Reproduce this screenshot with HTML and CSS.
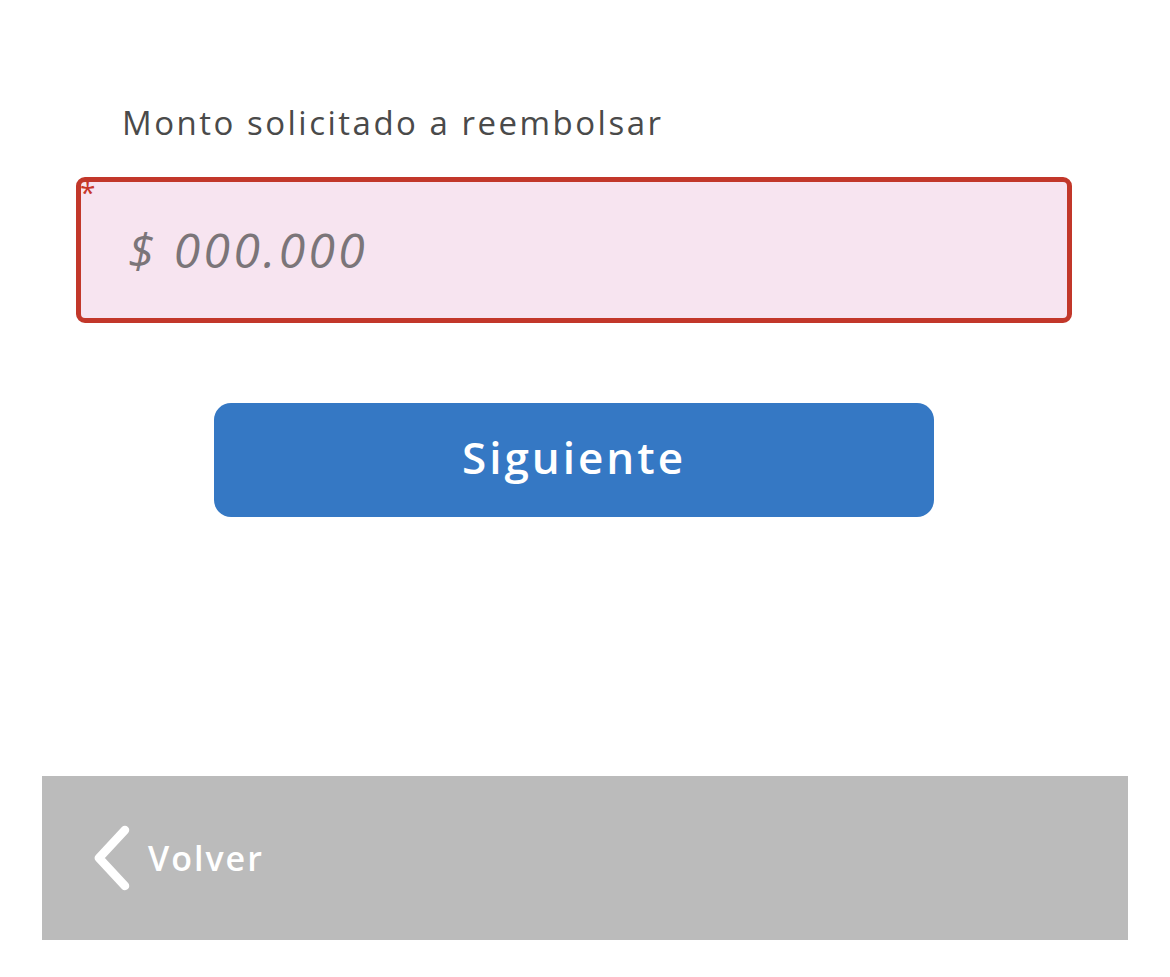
FILE: index.html
```html
<!DOCTYPE html>
<html lang="es">
<head>
  <meta charset="UTF-8" />
  <meta name="viewport" content="width=device-width, initial-scale=1.0"/>
  <title>Reembolso</title>
  <link rel="stylesheet" href="styles.css">
</head>
<body>
  <div class="page">
    <form class="form" id="amountForm">
      <label class="label" for="amount">Monto solicitado a reembolsar</label>
      <div class="field">
        <span class="required">*</span>
        <input type="text" id="amount" placeholder="$ 000.000" />
      </div>
      <button type="submit" class="next">Siguiente</button>
    </form>

    <div class="footer">
      <a class="back">
        <svg class="chevron" viewBox="0 0 40 66" width="40" height="66">
          <path d="M33 5 L7 33 L33 61" fill="none" stroke="#fff" stroke-width="8.5" stroke-linecap="round" stroke-linejoin="round"/>
        </svg>
        <span>Volver</span>
      </a>
    </div>
  </div>
</body>
</html>
```

FILE: styles.css
```css
* {
  margin: 0;
  padding: 0;
  box-sizing: border-box;
}

body {
  font-family: "Open Sans", Arial, sans-serif;
  background: #fff;
  color: #444;
}

.page {
  width: 1170px;
  height: 977px;
  padding-top: 96px;
}

.form {
  width: 996px;
  margin-left: 76px;
  display: flex;
  flex-direction: column;
}

.label {
  font-size: 33px;
  line-height: 54px;
  letter-spacing: 2.5px;
  color: #4a4a4a;
  padding-left: 46px;
  margin-bottom: 27px;
}

.field {
  position: relative;
  height: 146px;
}

.required {
  position: absolute;
  top: 1px;
  left: 4px;
  color: #c8362a;
  font-size: 28px;
  line-height: 28px;
}

.field input {
  width: 100%;
  height: 100%;
  border: 5px solid #c2372a;
  border-radius: 9px;
  background: #f7e4f0;
  padding-left: 47px;
  padding-bottom: 2px;
  font-family: inherit;
  font-size: 48px;
  font-style: italic;
  letter-spacing: 3.4px;
  color: #555;
  outline: none;
}

.field input::placeholder {
  color: #7b7579;
}

.next {
  width: 720px;
  height: 114px;
  margin: 80px 0 0 138px;
  padding-bottom: 6px;
  border: none;
  border-radius: 17px;
  background: #3578c4;
  color: #fff;
  font-family: inherit;
  font-size: 44px;
  font-weight: 600;
  letter-spacing: 3px;
  cursor: pointer;
}

.footer {
  margin: 259px 0 0 42px;
  width: 1086px;
  height: 164px;
  background: #bbbbbb;
  display: flex;
  align-items: center;
  padding-left: 50px;
}

.back {
  display: flex;
  align-items: center;
  gap: 16px;
  color: #fff;
  font-size: 34px;
  font-weight: 600;
  letter-spacing: 2px;
  cursor: pointer;
}
```
